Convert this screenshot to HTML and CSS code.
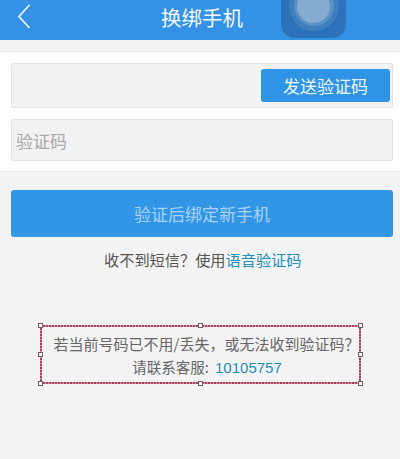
FILE: index.html
```html
<!DOCTYPE html>
<html lang="zh-CN">
<head>
<meta charset="utf-8">
<title>换绑手机</title>
<link rel="stylesheet" href="styles.css">
</head>
<body>
<div class="page">
  <header class="topbar">
    <svg class="back" width="16" height="26" viewBox="0 0 16 26"><path d="M13.5 2 L3 13.5 L13.5 25" fill="none" stroke="#f4f8fd" stroke-width="1.7"/></svg>
    <h1 class="title">换绑手机</h1>
  </header>
  <div class="touch"><span class="ring-a"><span class="ring-b"><span class="ring-c"></span></span></span></div>
  <section class="form">
    <div class="field field-phone"><button class="send">发送验证码</button></div>
    <div class="field field-code">验证码</div>
  </section>
  <button class="submit">验证后绑定新手机</button>
  <p class="voice">收不到短信&#xFF1F;使用<a class="link">语音验证码</a></p>
  <div class="notice">
    <i class="h tl"></i><i class="h tm"></i><i class="h tr"></i>
    <i class="h ml"></i><i class="h mr"></i>
    <i class="h bl"></i><i class="h bm"></i><i class="h br"></i>
    <p class="notice-line notice-lead">若当前号码已不用/丢失&#xFF0C;或无法收到验证码&#xFF1F;</p>
    <p class="notice-line notice-contact">请联系客服: <a class="link num">10105757</a></p>
  </div>
</div>
</body>
</html>
```
FILE: styles.css
```css
* { box-sizing: border-box; }
html, body { margin: 0; padding: 0; }
body { font-family: "Noto Sans CJK SC", "Liberation Sans", sans-serif; background: #f3f3f3; }
.page { position: relative; width: 400px; height: 459px; overflow: hidden; background: #f3f3f3; }
.topbar { height: 40px; background: #3391e6; display: flex; align-items: center; justify-content: center; position: relative; }
.back { position: absolute; left: 16px; top: 3px; }
.title { margin: 0 0 6px 4px; font-size: 20.5px; font-weight: 400; line-height: 28px; color: #f6f9fd; }
.touch { position: absolute; left: 281px; top: -26px; width: 65px; height: 64px; border-radius: 14px; background: #2c72b8; display: flex; align-items: center; justify-content: center; }
.ring-a { width: 50px; height: 50px; border-radius: 50%; background: #3e7fbf; display: flex; align-items: center; justify-content: center; }
.ring-b { width: 40px; height: 40px; border-radius: 50%; background: #5a92c8; display: flex; align-items: center; justify-content: center; }
.ring-c { width: 33px; height: 33px; border-radius: 50%; background: #86abd0; }
.form { margin-top: 11px; height: 121px; background: #fefefe; border-top: 1px solid #e4e4e4; border-bottom: 1px solid #e6e6e6; padding: 11px 7px 0 11px; display: flex; flex-direction: column; gap: 11px; }
.field { background: #f2f2f2; border: 1px solid #e2e2e2; border-radius: 2px; width: 382px; }
.field-phone { height: 45px; display: flex; align-items: center; justify-content: flex-end; padding-right: 2px; }
.field-code { height: 42px; padding-left: 4px; font-size: 17px; line-height: 41px; color: #a8a8a8; }
.send { width: 129px; height: 33px; border: 0; border-radius: 3px; background: #2f93e6; color: #f1f7fd; font: inherit; font-size: 17px; padding: 0; }
.submit { display: block; margin: 18px 0 0 11px; width: 382px; height: 47px; border: 0; border-radius: 3px; background: #3296e6; color: #a9d2f5; font: inherit; font-size: 17px; padding: 0; }
.voice { margin: 10px 0 0 104px; font-size: 15.2px; line-height: 24px; color: #555; white-space: nowrap; }
.link { color: #1f8fb8; }
.notice {
  position: relative; margin: 54px 0 0 40px; width: 321px; height: 59px; padding: 7px 0 0 6px; text-align: center;
  background:
    repeating-linear-gradient(90deg, #a5425c 0 2px, #d79aa9 2px 3px) top / 100% 2px no-repeat,
    repeating-linear-gradient(90deg, #a5425c 0 2px, #d79aa9 2px 3px) bottom / 100% 2px no-repeat,
    repeating-linear-gradient(0deg, #a5425c 0 2px, #d79aa9 2px 3px) left / 2px 100% no-repeat,
    repeating-linear-gradient(0deg, #a5425c 0 2px, #d79aa9 2px 3px) right / 2px 100% no-repeat;
}
.notice-line { margin: 0; font-size: 15px; line-height: 23px; color: #666; white-space: nowrap; }
.notice-lead { padding-left: 6px; }
.notice-contact { padding-left: 7px; font-size: 14.5px; }
.num { font-family: "Liberation Sans", sans-serif; font-size: 15px; margin-left: 3px; }
.h { position: absolute; width: 5px; height: 5px; background: #fff; border: 1px solid #7a5a60; }
.tl { left: -2px; top: -2px; }
.tm { left: 158px; top: -2px; }
.tr { right: -2px; top: -2px; }
.ml { left: -2px; top: 27px; }
.mr { right: -2px; top: 27px; }
.bl { left: -2px; bottom: -2px; }
.bm { left: 158px; bottom: -2px; }
.br { right: -2px; bottom: -2px; }
```
